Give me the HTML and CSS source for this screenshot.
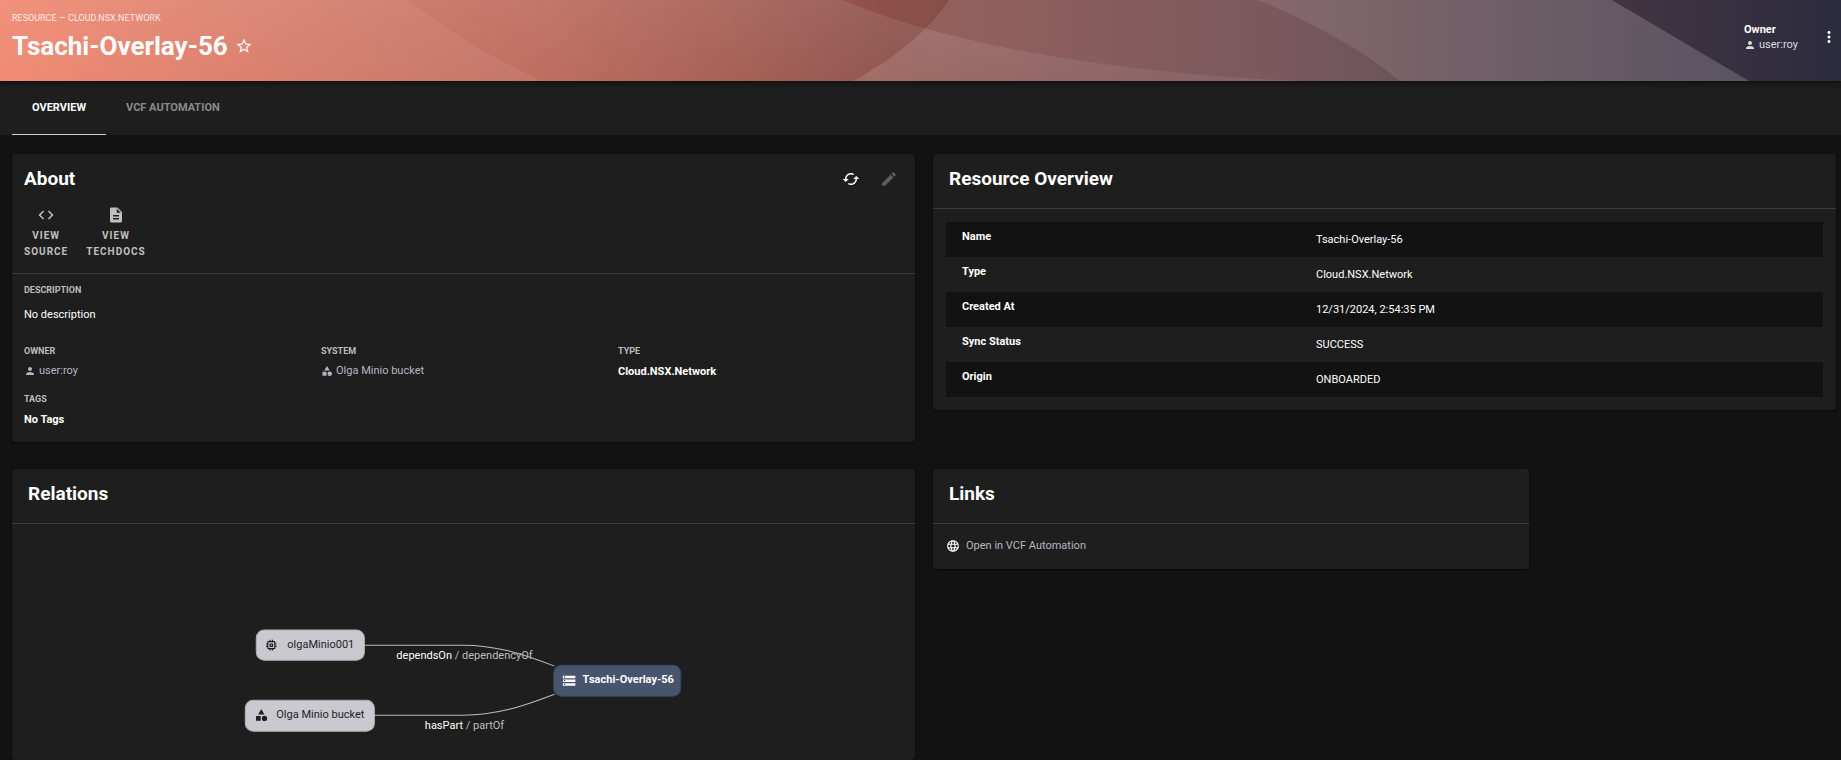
FILE: index.html
```html
<!DOCTYPE html>
<html lang="en">
<head>
  <meta charset="UTF-8">
  <meta name="viewport" content="width=device-width, initial-scale=1.0">
  <title>Tsachi-Overlay-56</title>
  <link rel="stylesheet" href="styles.css">
</head>
<body>
  <svg class="sprite" aria-hidden="true">
    <symbol id="icon-person" viewBox="0 0 24 24"><path d="M12 12c2.21 0 4-1.79 4-4s-1.79-4-4-4-4 1.79-4 4 1.79 4 4 4zm0 2c-2.67 0-8 1.34-8 4v2h16v-2c0-2.66-5.33-4-8-4z"/></symbol>
    <symbol id="icon-category" viewBox="0 0 24 24"><path d="M12 2l-5.5 9h11z"/><circle cx="17.5" cy="17.5" r="4.5"/><path d="M3 13.5h8v8H3z"/></symbol>
    <symbol id="icon-memory" viewBox="0 0 24 24"><path d="M15 9H9v6h6V9zm-2 4h-2v-2h2v2zm8-2V9h-2V7c0-1.100-.9-2-2-2h-2V3h-2v2h-2V3H9v2H7c-1.100 0-2 .9-2 2v2H3v2h2v2H3v2h2v2c0 1.100.9 2 2 2h2v2h2v-2h2v2h2v-2h2c1.100 0 2-.9 2-2v-2h2v-2h-2v-2h2zm-4 6H7V7h10v10z"/></symbol>
    <symbol id="icon-storage" viewBox="0 0 24 24"><path d="M2 20h20v-4H2v4zm2-3h2v2H4v-2zM2 4v4h20V4H2zm4 3H4V5h2v2zm-4 7h20v-4H2v4zm2-3h2v2H4v-2z"/></symbol>
  </svg>

  <header class="page-header">
    <svg class="header-bg" viewBox="0 0 1841 81" preserveAspectRatio="none" aria-hidden="true">
      <defs>
        <linearGradient id="base" gradientUnits="userSpaceOnUse" x1="0" y1="0" x2="1841" y2="0">
          <stop offset="0" stop-color="#ef7f65"/>
          <stop offset=".3" stop-color="#bb675a"/>
          <stop offset=".48" stop-color="#8d5049"/>
          <stop offset=".7" stop-color="#69464c"/>
          <stop offset=".9" stop-color="#3e3340"/>
          <stop offset="1" stop-color="#2b2b3e"/>
        </linearGradient>
        <linearGradient id="shine" x1="0" y1="0" x2="0" y2="1">
          <stop offset="0" stop-color="#fff" stop-opacity=".1"/>
          <stop offset="1" stop-color="#fff" stop-opacity=".04"/>
        </linearGradient>
      </defs>
      <path fill="url(#base)" d="M0 0h1841v81H0z"/>
      <path fill="url(#shine)" d="M0 0H843C930 38 1090 72 1300 81H0z"/>
      <path fill="#fff" fill-opacity=".06" d="M0 0H408Q460 42 541 81H0z"/>
      <path fill="#fff" fill-opacity=".1" d="M949 0Q920 44 853 81H1749L1612 0z"/>
      <path fill="#fff" fill-opacity=".03" d="M925 28C1020 56 1150 75 1300 81H853Q900 55 925 28z"/>
      <path fill="#fff" fill-opacity=".09" d="M1258 0Q1345 36 1400 81H1749L1612 0z"/>
    </svg>
    <div class="header-title">
      <p class="header-type">RESOURCE — CLOUD.NSX.NETWORK</p>
      <div class="title-row">
        <h1>Tsachi-Overlay-56</h1>
        <button class="icon-btn" aria-label="Add to favorites">
          <svg class="icon-18" viewBox="0 0 24 24"><path d="M22 9.240l-7.190-.62L12 2 9.190 8.630 2 9.240l5.460 4.730L5.820 21 12 17.270 18.180 21l-1.630-7.030L22 9.240zM12 15.400l-3.760 2.270 1-4.280-3.320-2.880 4.380-.38L12 6.100l1.710 4.040 4.380.38-3.320 2.880 1 4.280L12 15.400z"/></svg>
        </button>
      </div>
    </div>
    <div class="header-right">
      <div class="header-owner">
        <p>Owner</p>
        <a href="#" class="entity-link"><svg class="icon-12"><use href="#icon-person"/></svg>user:roy</a>
      </div>
      <button class="icon-btn" aria-label="More">
        <svg class="icon-18" viewBox="0 0 24 24"><path d="M12 8c1.100 0 2-.9 2-2s-.9-2-2-2-2 .9-2 2 .9 2 2 2zm0 2c-1.100 0-2 .9-2 2s.9 2 2 2 2-.9 2-2-.9-2-2-2zm0 6c-1.100 0-2 .9-2 2s.9 2 2 2 2-.9 2-2-.9-2-2-2z"/></svg>
      </button>
    </div>
  </header>

  <nav class="tabs">
    <a href="#" class="tab active">OVERVIEW</a>
    <a href="#" class="tab">VCF AUTOMATION</a>
  </nav>

  <main class="content">
    <section class="card about">
      <div class="about-header">
        <div class="about-title">
          <h2>About</h2>
          <div class="about-actions">
            <button class="icon-btn" aria-label="Refresh">
              <svg class="icon-18" viewBox="0 0 24 24"><path d="M19 8l-4 4h3c0 3.310-2.690 6-6 6-1.010 0-1.970-.25-2.800-.7l-1.460 1.460C8.970 19.540 10.430 20 12 20c4.420 0 8-3.580 8-8h3l-4-4zM6 12c0-3.310 2.690-6 6-6 1.010 0 1.970.25 2.800.7l1.460-1.460C15.030 4.460 13.570 4 12 4c-4.420 0-8 3.580-8 8H1l4 4 4-4H6z"/></svg>
            </button>
            <button class="icon-btn" aria-label="Edit" disabled>
              <svg class="icon-18" viewBox="0 0 24 24"><path d="M3 17.250V21h3.750L17.810 9.940l-3.750-3.750L3 17.250zM20.710 7.040c.39-.39.39-1.020 0-1.410l-2.340-2.340a.996.996 0 0 0-1.410 0l-1.830 1.830 3.750 3.750 1.830-1.830z"/></svg>
            </button>
          </div>
        </div>
        <div class="view-links">
          <a href="#" class="view-link">
            <svg class="icon-18" viewBox="0 0 24 24"><path d="M9.400 16.600L4.800 12l4.600-4.600L8 6l-6 6 6 6 1.400-1.400zm5.200 0l4.600-4.600-4.600-4.600L16 6l6 6-6 6-1.400-1.400z"/></svg>
            <span>VIEW<br>SOURCE</span>
          </a>
          <a href="#" class="view-link">
            <svg class="icon-18" viewBox="0 0 24 24"><path d="M14 2H6c-1.100 0-2 .9-2 2v16c0 1.100.9 2 2 2h12c1.100 0 2-.9 2-2V8l-6-6zm2 16H8v-2h8v2zm0-4H8v-2h8v2zm-3-5V3.500L18.500 9H13z"/></svg>
            <span>VIEW<br>TECHDOCS</span>
          </a>
        </div>
      </div>
      <div class="about-body">
        <div class="field wide description">
          <h3>DESCRIPTION</h3>
          <p>No description</p>
        </div>
        <div class="field">
          <h3>OWNER</h3>
          <a href="#" class="entity-link"><svg class="icon-12"><use href="#icon-person"/></svg>user:roy</a>
        </div>
        <div class="field">
          <h3>SYSTEM</h3>
          <a href="#" class="entity-link"><svg class="icon-12"><use href="#icon-category"/></svg>Olga Minio bucket</a>
        </div>
        <div class="field">
          <h3>TYPE</h3>
          <p class="value">Cloud.NSX.Network</p>
        </div>
        <div class="field wide">
          <h3>TAGS</h3>
          <p class="value">No Tags</p>
        </div>
      </div>
    </section>

    <section class="card">
      <h2 class="card-title">Resource Overview</h2>
      <div class="card-body">
        <table class="info-table">
          <tr><th scope="row">Name</th><td>Tsachi-Overlay-56</td></tr>
          <tr><th scope="row">Type</th><td>Cloud.NSX.Network</td></tr>
          <tr><th scope="row">Created At</th><td>12/31/2024, 2:54:35 PM</td></tr>
          <tr><th scope="row">Sync Status</th><td>SUCCESS</td></tr>
          <tr><th scope="row">Origin</th><td>ONBOARDED</td></tr>
        </table>
      </div>
    </section>

    <section class="card relations">
      <h2 class="card-title">Relations</h2>
      <svg class="graph" viewBox="0 0 902 236" role="img" aria-label="Relations graph">
        <path class="edge" d="M351 121H450C483 121 508 129 542 142"/>
        <path class="edge" d="M361 191H450C483 191 508 183 542 170"/>
        <g class="node">
          <rect x="244" y="106" width="108" height="30" rx="8"/>
          <use href="#icon-memory" x="252" y="114" width="14" height="14"/>
          <text x="275" y="124">olgaMinio001</text>
        </g>
        <g class="node">
          <rect x="233" y="176" width="129" height="31" rx="8"/>
          <use href="#icon-category" x="242" y="184" width="14" height="14"/>
          <text x="264" y="194">Olga Minio bucket</text>
        </g>
        <g class="node focused">
          <rect x="541" y="141" width="127" height="31" rx="8"/>
          <use href="#icon-storage" x="549" y="149" width="15" height="15"/>
          <text x="570" y="159">Tsachi-Overlay-56</text>
        </g>
        <text class="edge-label" x="452" y="135"><tspan class="primary">dependsOn</tspan> / dependencyOf</text>
        <text class="edge-label" x="452" y="205"><tspan class="primary">hasPart</tspan> / partOf</text>
      </svg>
    </section>

    <section class="card links">
      <h2 class="card-title">Links</h2>
      <div class="card-body">
        <a href="#" class="external-link">
          <svg class="icon-14" viewBox="0 0 24 24"><path d="M11.990 2C6.470 2 2 6.480 2 12s4.470 10 9.990 10C17.520 22 22 17.520 22 12S17.520 2 11.990 2zm6.930 6h-2.950c-.32-1.250-.78-2.450-1.380-3.560 1.840.63 3.370 1.910 4.330 3.560zM12 4.040c.83 1.200 1.480 2.530 1.910 3.960h-3.820c.43-1.430 1.080-2.760 1.910-3.960zM4.260 14C4.100 13.360 4 12.690 4 12s.1-1.360.26-2h3.380c-.08.66-.14 1.320-.14 2s.06 1.340.14 2H4.260zm.82 2h2.950c.32 1.250.78 2.450 1.380 3.560-1.840-.63-3.370-1.900-4.330-3.560zm2.950-8H5.080c.96-1.660 2.490-2.930 4.330-3.560C8.810 5.550 8.350 6.750 8.030 8zM12 19.960c-.83-1.200-1.480-2.530-1.910-3.960h3.820c-.43 1.430-1.080 2.760-1.910 3.960zM14.340 14H9.660c-.09-.66-.16-1.320-.16-2s.07-1.350.16-2h4.680c.09.650.16 1.320.16 2s-.07 1.340-.16 2zm.25 5.560c.6-1.110 1.060-2.310 1.380-3.560h2.950c-.96 1.650-2.490 2.930-4.330 3.560zM16.360 14c.08-.66.14-1.320.14-2s-.06-1.340-.14-2h3.380c.16.640.26 1.310.26 2s-.1 1.360-.26 2h-3.380z"/></svg>
          Open in VCF Automation
        </a>
      </div>
    </section>
  </main>
</body>
</html>
```

FILE: styles.css
```css
* {
  box-sizing: border-box;
}

body {
  margin: 0;
  background-color: #121212;
  color: #fff;
  font-family: Roboto, sans-serif;
  font-size: 11px;
  line-height: 16px;
}

h1, h2, h3, p {
  margin: 0;
}

a {
  color: #b6b6c2;
  text-decoration: none;
}

svg {
  fill: currentColor;
}

.sprite {
  position: absolute;
  width: 0;
  height: 0;
}

.icon-12 {
  width: 12px;
  height: 12px;
}

.icon-14 {
  width: 14px;
  height: 14px;
}

.icon-18 {
  width: 18px;
  height: 18px;
}

.icon-btn {
  display: flex;
  padding: 0;
  border: none;
  background: none;
  color: #fff;
  cursor: pointer;
}

.icon-btn:disabled {
  color: #5f5f5f;
  cursor: default;
}

.entity-link {
  display: flex;
  align-items: center;
  gap: 3px;
}

/* header */
.page-header {
  position: relative;
  display: flex;
  justify-content: space-between;
  padding: 12px 3px 13px 12px;
  box-shadow: 0 2px 6px rgba(0, 0, 0, 0.5);
}

.header-bg {
  position: absolute;
  inset: 0;
  width: 100%;
  height: 100%;
}

.header-title,
.header-right {
  position: relative;
}

.header-type {
  color: rgba(255, 255, 255, 0.85);
  font-size: 9px;
  line-height: 12px;
}

.title-row {
  display: flex;
  align-items: center;
  gap: 7px;
}

h1 {
  font-size: 26px;
  line-height: 44px;
}

.header-right {
  display: flex;
  align-items: center;
  align-self: flex-start;
  gap: 22px;
  padding-top: 10px;
}

.header-owner p {
  font-weight: 700;
}

.header-owner a {
  color: #dcdce0;
  line-height: 14px;
}

/* tabs */
.tabs {
  display: flex;
  padding-left: 12px;
  background-color: #1e1e1e;
}

.tab {
  padding: 19px 20px 18px;
  border-bottom: 1px solid transparent;
  color: #8a8a8a;
  font-weight: 700;
}

.tab.active {
  color: #fff;
  border-bottom-color: #cfcfd6;
}

/* cards */
.content {
  display: grid;
  grid-template-columns: repeat(12, 1fr);
  align-items: start;
  gap: 27px 18px;
  padding: 19px 5px 0 12px;
}

.card {
  grid-column: span 6;
  background-color: #1e1e1e;
  border-radius: 4px;
  box-shadow: 0 1px 2px rgba(0, 0, 0, 0.5);
}

.card.links {
  grid-column: span 4;
}

h2 {
  font-size: 19px;
  line-height: 24px;
}

.card-title {
  padding: 13px 16px 17px;
  border-bottom: 1px solid #3c3c3c;
}

.card-body {
  padding: 13px;
}

/* about */
.about-header {
  padding: 13px 12px 13px;
  border-bottom: 1px solid #3c3c3c;
}

.about-title,
.about-actions,
.view-links {
  display: flex;
}

.about-title {
  justify-content: space-between;
}

.about-actions {
  align-items: center;
  gap: 20px;
  padding-right: 5px;
}

.view-links {
  gap: 18px;
  padding-top: 15px;
}

.view-link {
  display: flex;
  flex-direction: column;
  align-items: center;
  gap: 4px;
  font-size: 10px;
  font-weight: 700;
  letter-spacing: 1px;
  text-align: center;
  color: #c0c0c0;
}

.about-body {
  display: grid;
  grid-template-columns: repeat(3, 1fr);
  gap: 13px 12px;
  padding: 10px 12px 14px;
}

.field.wide {
  grid-column: 1 / -1;
}

.field h3 {
  color: #bdbdbd;
  font-size: 9px;
  line-height: 12px;
  margin-bottom: 6px;
}

.value {
  padding-top: 1px;
  font-weight: 700;
}

.description p {
  padding: 5px 0 9px;
}

/* resource overview */
.info-table {
  width: 100%;
  border-collapse: collapse;
}

.info-table tr:nth-child(odd) {
  background-color: #121212;
}

.info-table th,
.info-table td {
  height: 35px;
  padding: 10px 16px 9px;
  text-align: left;
}

.info-table th {
  width: 354px;
  padding: 7px 16px 12px;
}

/* relations */
.graph {
  display: block;
  width: 100%;
}

.graph text {
  font-size: 11px;
}

.edge {
  fill: none;
  stroke: #bdbdbd;
}

.node {
  fill: #1e1e1e;
}

.node rect {
  fill: #cac9d0;
  stroke: #b0b0b4;
}

.node.focused {
  fill: #fff;
  font-weight: 700;
}

.node.focused rect {
  fill: #46546e;
  stroke: #3a4660;
}

.edge-label {
  fill: #bdbdbd;
  text-anchor: middle;
}

.edge-label .primary {
  fill: #fff;
}

/* links */
.external-link {
  display: flex;
  align-items: center;
  gap: 6px;
  padding: 1px 0 2px;
}

.external-link svg {
  color: #fff;
}
```
